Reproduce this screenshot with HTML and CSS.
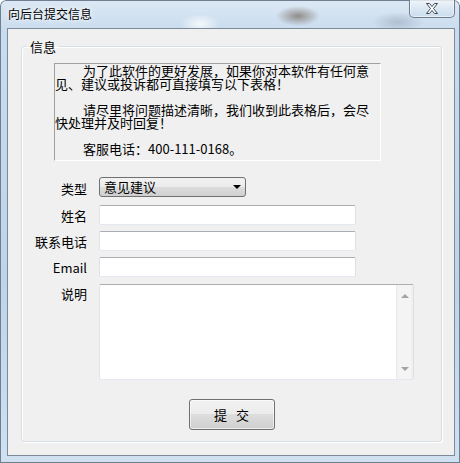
FILE: index.html
```html
<!DOCTYPE html>
<html>
<head>
  <meta charset="utf-8">
  <title>向后台提交信息</title>
  <link rel="stylesheet" href="styles.css">
</head>
<body>
  <div class="window">
    <div class="titlebar">
      <span class="title">向后台提交信息</span>
      <button class="close" title="关闭">
        <svg width="14" height="11" viewBox="0 0 14 11">
          <path d="M1.5 0.5h3l2.5 3 2.5-3h3l-4 5 4 5h-3l-2.5-3-2.5 3h-3l4-5z" fill="#fff" stroke="#3d4654" stroke-width="1" stroke-linejoin="round"/>
        </svg>
      </button>
    </div>
    <div class="client">
      <fieldset class="group">
        <legend>信息</legend>
        <div class="notice">
          <p>为了此软件的更好发展，如果你对本软件有任何意<br>见、建议或投诉都可直接填写以下表格！</p>
          <p>请尽里将问题描述清晰，我们收到此表格后，会尽<br>快处理并及时回复！</p>
          <p>客服电话：400-111-0168。</p>
        </div>
        <div class="form">
          <label class="lbl">类型</label>
          <div class="combo">意见建议<span class="arrow"></span></div>
          <label class="lbl">姓名</label>
          <input class="edit" type="text">
          <label class="lbl">联系电话</label>
          <input class="edit" type="text">
          <label class="lbl">Email</label>
          <input class="edit" type="text">
          <label class="lbl top">说明</label>
          <div class="memo">
            <textarea></textarea>
            <div class="vscroll">
              <span class="up"></span>
              <span class="down"></span>
            </div>
          </div>
        </div>
        <div class="actions">
          <button class="submit">提 交</button>
        </div>
      </fieldset>
    </div>
  </div>
</body>
</html>
```

FILE: styles.css
```css
html, body {
    margin: 0;
    padding: 0;
}
body {
    width: 460px;
    height: 463px;
    overflow: hidden;
    font-family: "Noto Sans CJK SC", "DejaVu Sans", sans-serif;
    font-size: 13px;
    color: #000;
}
.window {
    box-sizing: border-box;
    width: 460px;
    height: 463px;
    padding: 0 5px 7px 7px;
    border-radius: 6px 6px 0 0;
    background:
        radial-gradient(ellipse 22px 10px at 298px 16px, rgba(90, 70, 50, .55), transparent),
        radial-gradient(ellipse 26px 10px at 398px 22px, rgba(120, 130, 150, .35), transparent),
        radial-gradient(ellipse 20px 10px at 200px 24px, rgba(255, 255, 255, .8), transparent),
        linear-gradient(to bottom, #dce8f4 0, #c9dcef 30px, #bed4ea 60%, #cfe0f1 100%);
    box-shadow: inset 0 0 0 1px #6f7f90;
    display: flex;
    flex-direction: column;
}
.titlebar {
    height: 28px;
    display: flex;
    align-items: flex-start;
    justify-content: space-between;
    padding-left: 1px;
}
.title {
    font-size: 12px;
    line-height: 14px;
    margin-top: 7px;
    text-shadow: 0 0 6px #fff, 0 0 3px #fff;
}
.close {
    width: 46px;
    height: 18px;
    margin: 0;
    padding: 0;
    border: 1px solid #6d7d90;
    border-top: none;
    border-radius: 0 0 5px 5px;
    background: linear-gradient(to bottom, rgba(255,255,255,.55), rgba(225,235,245,.35) 50%, rgba(200,215,232,.4));
    box-shadow: inset 0 0 0 1px rgba(255,255,255,.5);
    display: flex;
    align-items: center;
    justify-content: center;
}
.close svg {
    display: block;
    margin-top: -1px;
}
.client {
    flex: 1;
    background: #f0f0f0;
    border: 1px solid #7d8a98;
    display: flex;
    flex-direction: column;
}
.group {
    width: 421px;
    box-sizing: border-box;
    margin: 11px 0 0 13px;
    padding: 10px 0 11px 0;
    border: 1px solid #d5dfe5;
    border-radius: 3px;
    box-shadow: inset 1px 1px 0 #fff, 1px 1px 0 #fff;
}
.group legend {
    font-size: 13px;
    line-height: 13px;
    padding: 0 3px;
    margin-left: 5px;
}
.notice {
    width: 327px;
    height: 98px;
    box-sizing: border-box;
    margin-left: 32px;
    border: 1px solid;
    border-color: #a0a0a0 #fff #fff #a0a0a0;
    font-size: 13px;
    line-height: 13px;
    white-space: nowrap;
}
.notice p {
    margin: 0 0 13px 0;
    text-indent: 28px;
}
.form {
    display: grid;
    grid-template-columns: 65px auto;
    column-gap: 12px;
    row-gap: 6px;
    margin-top: 16px;
    align-items: center;
}
.lbl {
    text-align: right;
    font-size: 13px;
    line-height: 13px;
    white-space: nowrap;
}
.lbl.top {
    align-self: start;
    padding-top: 4px;
}
.combo {
    position: relative;
    width: 147px;
    height: 20px;
    box-sizing: border-box;
    margin-bottom: 2px;
    padding-left: 4px;
    border: 1px solid #707070;
    border-radius: 3px;
    background: linear-gradient(to bottom, #f2f2f2 0, #ebebeb 50%, #dddddd 50%, #cfcfcf 100%);
    line-height: 18px;
}
.arrow {
    position: absolute;
    right: 4px;
    top: 7px;
    border-left: 4px solid transparent;
    border-right: 4px solid transparent;
    border-top: 4px solid #000;
}
.edit {
    width: 257px;
    height: 20px;
    box-sizing: border-box;
    margin: 0;
    padding: 0 3px;
    border: 1px solid;
    border-color: #abadb3 #dbdfe6 #e3e9ef #e2e3ea;
    border-radius: 2px;
    background: #fff;
    font: inherit;
    outline: none;
}
.memo {
    width: 315px;
    height: 96px;
    box-sizing: border-box;
    margin-top: 1px;
    border: 1px solid;
    border-color: #abadb3 #dbdfe6 #e3e9ef #e2e3ea;
    border-radius: 2px;
    background: #fff;
    display: flex;
}
.memo textarea {
    flex: 1;
    border: none;
    outline: none;
    resize: none;
    margin: 0;
    padding: 2px 3px;
    font: inherit;
    background: transparent;
}
.vscroll {
    width: 17px;
    background: linear-gradient(to right, #e6e6e6, #f4f4f4 2px, #f4f4f4 15px, #ececec);
    display: flex;
    flex-direction: column;
    justify-content: space-between;
    align-items: center;
    padding: 9px 0 8px;
    box-sizing: border-box;
}
.vscroll .up {
    border-left: 4px solid transparent;
    border-right: 4px solid transparent;
    border-bottom: 4px solid #a3a3a3;
}
.vscroll .down {
    border-left: 4px solid transparent;
    border-right: 4px solid transparent;
    border-top: 4px solid #a3a3a3;
}
.actions {
    display: flex;
    justify-content: center;
    margin-top: 19px;
}
.submit {
    width: 86px;
    height: 31px;
    margin: 0;
    padding: 0;
    border: 1px solid #707070;
    border-radius: 3px;
    background: linear-gradient(to bottom, #f2f2f2 0, #ebebeb 50%, #dddddd 50%, #cfcfcf 100%);
    box-shadow: inset 0 0 0 1px rgba(255,255,255,.6);
    font: inherit;
    font-size: 13px;
    word-spacing: 6px;
    color: #000;
}
```
